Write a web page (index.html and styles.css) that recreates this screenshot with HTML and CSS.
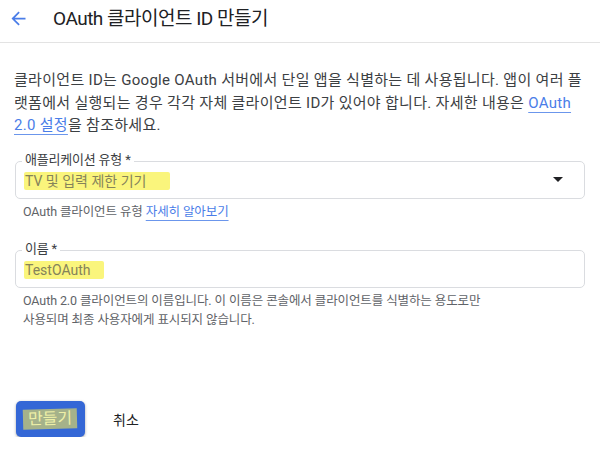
FILE: index.html
```html
<!DOCTYPE html>
<html lang="ko">
<head>
<meta charset="utf-8">
<link rel="stylesheet" href="styles.css">
</head>
<body>
<header class="topbar">
  <svg class="back" viewBox="0 0 24 24" width="21" height="21"><path d="M20 11H7.83l5.59-5.59L12 4l-8 8 8 8 1.41-1.41L7.83 13H20v-2z"/></svg>
  <h1 class="title">OAuth 클라이언트 ID 만들기</h1>
</header>
<main class="content">
  <p class="intro">클라이언트 ID는 Google OAuth 서버에서 단일 앱을 식별하는 데 사용됩니다. 앱이 여러 플<br>랫폼에서 실행되는 경우 각각 자체 클라이언트 ID가 있어야 합니다. 자세한 내용은 <a class="link" href="#">OAuth<br>2.0 설정</a>을 참조하세요.</p>

  <div class="field field-select">
    <span class="field-label">애플리케이션 유형 *</span>
    <span class="field-value"><span class="hl">TV 및 입력 제한 기기</span></span>
    <span class="caret"></span>
  </div>
  <p class="hint hint-first">OAuth 클라이언트 유형 <a class="link" href="#">자세히 알아보기</a></p>

  <div class="field field-name">
    <span class="field-label">이름 *</span>
    <span class="field-value"><span class="hl">TestOAuth</span></span>
  </div>
  <p class="hint hint-second">OAuth 2.0 클라이언트의 이름입니다. 이 이름은 콘솔에서 클라이언트를 식별하는 용도로만<br>사용되며 최종 사용자에게 표시되지 않습니다.</p>

  <div class="actions">
    <button class="btn-primary"><span class="btn-hl">만들기</span></button>
    <button class="btn-text">취소</button>
  </div>
</main>
</body>
</html>
```
FILE: styles.css
```css
* { box-sizing: border-box; }
body {
  margin: 0;
  font-family: Roboto, "Noto Sans CJK KR", sans-serif;
  color: #3c4043;
  background: #fff;
}
.topbar {
  height: 43px;
  border-bottom: 1px solid #e3e3e3;
  display: flex;
  align-items: center;
  padding-left: 8px;
}
.back {
  fill: #4a7de8;
  margin-top: -6px;
}
.title {
  margin: -10px 0 0 24px;
  font-size: 19px;
  font-weight: 400;
  color: #202124;
  letter-spacing: -0.5px;
}
.content {
  padding: 0 15px;
}
.intro {
  margin: 26px -10px 0 -1px;
  font-size: 15px;
  line-height: 22.5px;
  color: #3c4043;
  letter-spacing: 0.3px;
}
.link {
  color: #4a7de8;
  text-decoration: underline;
  text-decoration-color: #6b96ec;
  text-underline-offset: 4px;
  text-decoration-thickness: 1px;
}
.field {
  position: relative;
  height: 38px;
  border: 1px solid #dadce0;
  border-radius: 5px;
  display: flex;
  align-items: center;
  padding: 0 8px;
}
.field-select { margin-top: 24px; }
.field-name { margin-top: 30px; }
.field-label {
  position: absolute;
  left: 6px;
  top: -11px;
  padding: 0 3px;
  background: #fff;
  font-size: 13px;
  line-height: 18px;
  color: #3c4043;
  letter-spacing: -0.2px;
}
.field-value {
  font-size: 14px;
  line-height: 18px;
  margin-top: 2px;
}
.hl {
  background: #faf57c;
  color: #85835a;
  padding: 1px 24px 1px 1px;
  border-radius: 2px;
}
.field-name .hl { padding-right: 14px; }
.caret {
  margin-left: auto;
  margin-right: 13px;
  width: 0;
  height: 0;
  border-left: 5px solid transparent;
  border-right: 5px solid transparent;
  border-top: 5px solid #202124;
}
.hint {
  margin: 0;
  padding-left: 8px;
  font-size: 12.5px;
  color: #5f6368;
  letter-spacing: -0.1px;
}
.hint-first {
  margin-top: 5px;
  line-height: 16px;
}
.hint-second {
  margin-top: 3px;
  line-height: 19px;
}
.actions {
  margin-top: 72px;
  display: flex;
  align-items: center;
  gap: 28px;
  padding-left: 1px;
}
.btn-primary {
  width: 69px;
  height: 36px;
  border: none;
  border-radius: 5px;
  background: #3467d6;
  box-shadow: 0 1px 3px rgba(0,0,0,0.35);
  display: flex;
  align-items: center;
  justify-content: center;
  font-family: inherit;
  padding: 0;
}
.btn-hl {
  background: #a5b28a;
  color: #eef0a8;
  font-size: 16px;
  line-height: 20px;
  padding: 0 5px;
  transform: rotate(-1.5deg);
}
.btn-text {
  border: none;
  background: none;
  padding: 0;
  font-family: inherit;
  font-size: 14px;
  color: #202124;
}
```
